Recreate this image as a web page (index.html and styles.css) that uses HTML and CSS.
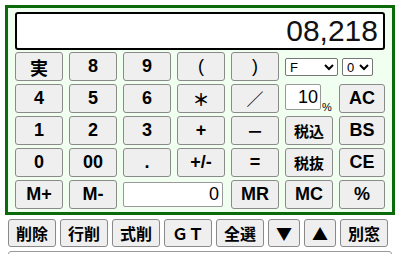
FILE: index.html
```
<!DOCTYPE html>
<html>
<head>
	<meta charset="utf-8">
	<title>電卓</title>
	<meta name="viewport" content="width=device-width">
	<link rel="stylesheet" href="styles.css">
</head>
<body>
	<div class="calc">
		<div class="display">08,218</div>
		<div class="keys">
			<button class="key kanji big">実</button>
			<button class="key">8</button>
			<button class="key">9</button>
			<button class="key thin">(</button>
			<button class="key thin">)</button>
			<div class="opts">
				<select class="sel-mode"><option>F</option><option>CUT</option><option>UP</option><option>5/4</option></select>
				<select class="sel-digits"><option>0</option><option>1</option><option>2</option><option>3</option></select>
			</div>

			<button class="key">4</button>
			<button class="key">5</button>
			<button class="key">6</button>
			<button class="key wide">＊</button>
			<button class="key wide thin">／</button>
			<div class="tax">
				<input type="text" class="tax-rate" value="10"><span class="pct">%</span>
			</div>
			<button class="key">AC</button>

			<button class="key">1</button>
			<button class="key">2</button>
			<button class="key">3</button>
			<button class="key">+</button>
			<button class="key wide">－</button>
			<button class="key kanji">税込</button>
			<button class="key">BS</button>

			<button class="key">0</button>
			<button class="key">00</button>
			<button class="key">.</button>
			<button class="key">+/-</button>
			<button class="key">=</button>
			<button class="key kanji">税抜</button>
			<button class="key">CE</button>

			<button class="key">M+</button>
			<button class="key">M-</button>
			<div class="memory">
				<input type="text" class="mem" value="0">
			</div>
			<button class="key">MR</button>
			<button class="key">MC</button>
			<button class="key">%</button>
		</div>
	</div>

	<div class="toolbar">
		<button class="tool">削除</button>
		<button class="tool">行削</button>
		<button class="tool">式削</button>
		<button class="tool">ＧＴ</button>
		<button class="tool">全選</button>
		<button class="tool">▼</button>
		<button class="tool">▲</button>
		<button class="tool">別窓</button>
	</div>
	<textarea class="history"></textarea>
</body>
</html>
```
FILE: styles.css
```
html {
	overflow: hidden;
}
body {
	margin: 5px;
	font-family: "Liberation Sans", "Noto Sans CJK JP", sans-serif;
	font-size: 16px;
}

.calc {
	border: 3px solid #0b6b0b;
	background: #f0fff0;
	padding: 4px 7px 3px;
}

.display {
	height: 38px;
	box-sizing: border-box;
	border: 2px solid #000;
	border-radius: 3px;
	background: #fff;
	margin-bottom: 2px;
	padding: 0 5px;
	text-align: right;
	font-size: 30px;
	line-height: 34px;
	color: #111;
}

.keys {
	display: grid;
	grid-template-columns: 48px 48px 48px 48px 48px 48px 46px;
	grid-auto-rows: 29px;
	column-gap: 6px;
	row-gap: 3px;
}

.key {
	margin: 0;
	padding: 0;
	background: #efefef;
	border: 1px solid #8a8a8a;
	border-radius: 3px;
	font-family: "Liberation Sans", "Noto Sans CJK JP", sans-serif;
	font-size: 18px;
	font-weight: bold;
	color: #000;
}
.key.kanji {
	font-size: 15px;
}
.key.big {
	font-size: 18px;
}
.key.thin {
	font-weight: normal;
}
.key.wide {
	font-size: 17px;
}

.opts {
	grid-column: span 2;
	display: flex;
	align-items: center;
	gap: 4px;
}
.opts select {
	height: 18px;
	font-size: 13px;
	padding: 0;
	border: 1px solid #767676;
	border-radius: 2px;
	background: #fff;
}
.sel-mode {
	width: 53px;
}
.sel-digits {
	width: 31px;
}

.tax {
	display: flex;
	align-items: flex-end;
}
.tax-rate {
	width: 36px;
	height: 26px;
	box-sizing: border-box;
	margin: 0;
	padding: 0 2px 0 0;
	border: 1px solid #999;
	border-radius: 2px;
	text-align: right;
	font-family: "Liberation Sans", sans-serif;
	font-size: 18px;
	margin-bottom: 3px;
}
.pct {
	font-size: 11px;
	margin-left: 1px;
	line-height: 12px;
}

.memory {
	grid-column: span 2;
	display: flex;
	align-items: center;
}
.mem {
	width: 100px;
	height: 25px;
	box-sizing: border-box;
	margin: 0;
	padding: 0 3px 0 0;
	border: 1px solid #999;
	border-radius: 2px;
	text-align: right;
	font-family: "Liberation Sans", sans-serif;
	font-size: 18px;
}

.toolbar {
	display: flex;
	gap: 4px;
	margin: 4px 3px 0;
}
.tool {
	height: 28px;
	margin: 0;
	padding: 0 7px;
	background: #efefef;
	border: 1px solid #8a8a8a;
	border-radius: 3px;
	font-family: "Noto Sans CJK JP", sans-serif;
	font-size: 16px;
	font-weight: bold;
	color: #000;
}

.history {
	display: block;
	box-sizing: border-box;
	width: 384px;
	height: 80px;
	margin: 4px 3px 0;
	border: 1px solid #999;
	border-radius: 3px;
}
```
